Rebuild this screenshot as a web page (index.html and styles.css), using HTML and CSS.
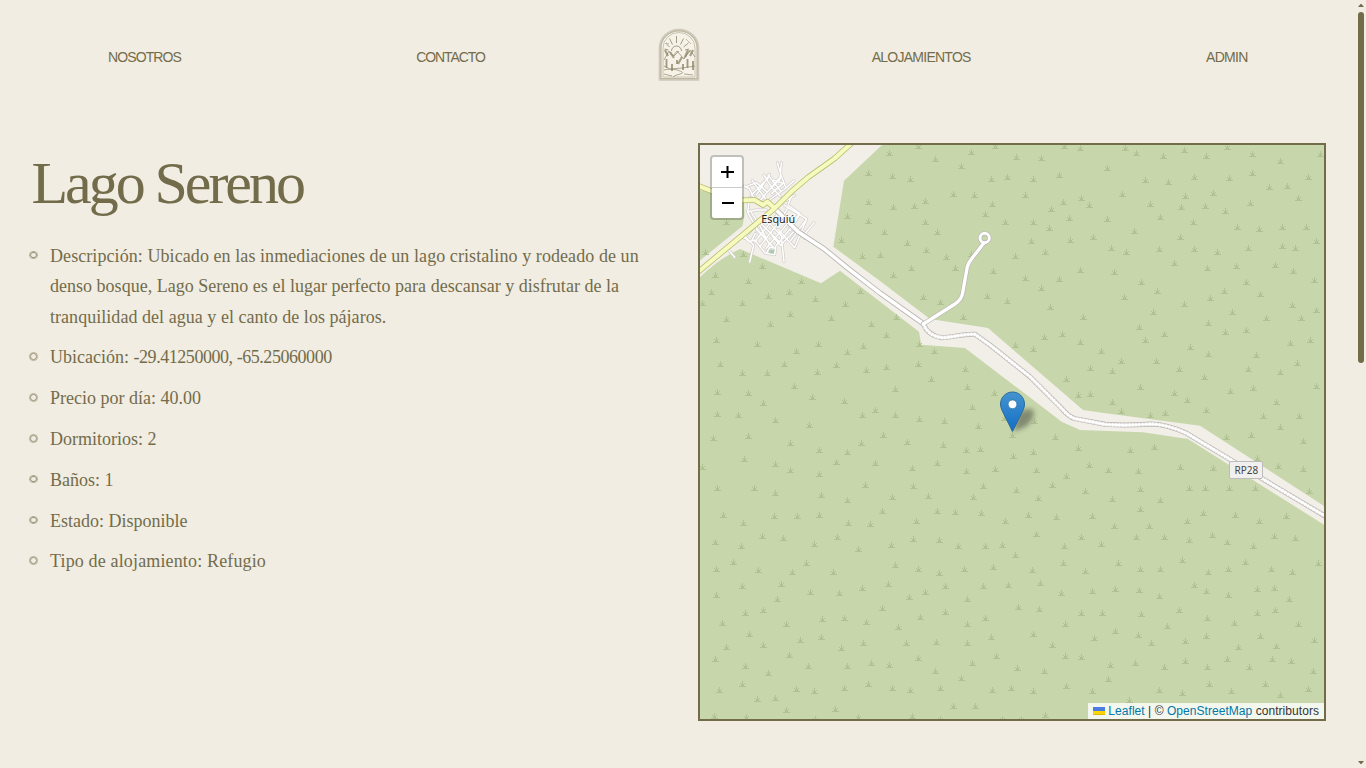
FILE: index.html
```html
<!DOCTYPE html>
<html lang="es">
<head>
<meta charset="utf-8">
<title>Lago Sereno</title>
<link rel="stylesheet" href="styles.css">
</head>
<body>
<header class="nav">
  <a class="link">NOSOTROS</a>
  <a class="link contact">CONTACTO</a>
  <a class="logo">
    <svg width="42" height="54" viewBox="0 0 42 54" fill="none" stroke="#736c4b">
      <path d="M2 51.500V20a19 18 0 0 1 38 0V51.500Z" fill="#f6f2e8" stroke="#cdc8b8" stroke-width="2.600"/>
      <path d="M3 50.500V20a18 17 0 0 1 36 0V50.500Z" stroke="#a9a38b" stroke-width=".6"/>
      <path d="M5 49V20a16 15.500 0 0 1 32 0V49Z" stroke="#b5af99" stroke-width=".7"/>
      <g opacity=".8">
      <path d="M13.500 23a5 5 0 0 1 10 0M18.500 15V8M14.500 16.500l-3-6M22.500 16.500l3-6M11.500 19l-4-4M25.500 19l5-4M10.500 22l-4-1M27 22l4-1" stroke-width=".8"/>
      <path d="M6 32l5-9 4 5 4-5 7 8 6-9 5 7M16 28l5-5M26 30l6-7" stroke-width=".7"/>
      <path d="M7 22l3 6M12 24l4 6M24 29l-4 7M30 22l-3 7M35 22l-3 6" stroke-width="2.200" opacity=".75"/>
      <path d="M8.500 31v9M14 36v7M19 32v4M25 36v6M29.500 31v9M35 33v9" stroke-width="1.900" opacity=".8"/>
      <path d="M6 38l6 3 12-1 13-2M6 42c8-2 15 0 18 2s-6 2-9 5M6 46l8 2M26 46l9 1" stroke-width=".7"/>
      <path d="M8 15l3 1M28 11l5 5" stroke-width=".5"/>
      </g>
    </svg>
  </a>
  <a class="link aloj">ALOJAMIENTOS</a>
  <a class="link admin">ADMIN</a>
</header>
<main class="content">
  <section class="info">
    <h1 class="title">Lago Sereno</h1>
    <ul class="facts">
      <li><span class="l1"><span class="key">Descripción:</span> Ubicado en las inmediaciones de un lago cristalino y rodeado de un</span><br><span class="l2">denso bosque, Lago Sereno es el lugar perfecto para descansar y disfrutar de la</span><br><span class="l3">tranquilidad del agua y el canto de los pájaros.</span></li>
      <li><span class="key">Ubicación:</span> <span class="coords">-29.41250000, -65.25060000</span></li>
      <li><span class="key">Precio por día:</span> 40.00</li>
      <li><span class="key">Dormitorios:</span> 2</li>
      <li><span class="key">Baños:</span> <span class="coords">1</span></li>
      <li><span class="key">Estado:</span> Disponible</li>
      <li class="kind"><span class="key">Tipo de alojamiento:</span> Refugio</li>
    </ul>
  </section>
  <section class="map">
    <svg class="tiles" width="624" height="574" viewBox="0 0 624 574">
      <defs>
        <g id="shrub" fill="#b0c291" shape-rendering="crispEdges">
          <path d="M3 0h1v5h-1zM0 5h7v1h-7zM1 2h1v1h-1zM5 2h1v1h-1zM2 3h3v2h-3z"/>
        </g>
        <filter id="soft" x="-50%" y="-50%" width="200%" height="200%"><feGaussianBlur stdDeviation="2.500"/></filter>
        <linearGradient id="pin" x2="0" y2="1"><stop stop-color="#4593d0"/><stop offset="1" stop-color="#126fc6"/></linearGradient>
      </defs>
      <rect width="624" height="574" fill="#f2efe9"/>
      <g fill="#c8d7ab">
        <path d="M182 0L144 35.700 133.300 101.700 180 136 230 174 288 183 383 265 400 267.500 500 280.700 624 361V0Z"/>
        <path d="M0 132Q20 113 40 104L121 138.300 140 125.700 219 186.700 221.300 199.700 265 203 361.700 276.700 380 285 443 287.300 488 294 624 379.700V574H0Z"/>
        <path d="M0 45L44 55 44.500 70 42.500 81 0 115.500Z"/>
      </g>
      <g id="shrubs"></g>
      <g fill="none" stroke-linecap="round" stroke-linejoin="round">
        <g transform="translate(-2 -5) scale(.33333)">
          <defs>
            <path id="st" d="M238 68l12 40 14 36-50 36M250 68l-4 50-30 30M198 105l25 40 24 24M210 105l38 48M163 122l40 55M145 140l30-12 30 26M138 138l16 8 14 28M175 165l40-62M160 165l50-50M188 180l55-65M225 120l30 10-34 30M264 144l24-22M150 215l25-5 30 0M155 172l-6 45 28 50 44 50M160 218l24 36 30 60M150 282l34-42M138 295l40-50M136 285l16 20 18-5 32 40M155 366l12-50-30-30M170 305l70-84M185 320l72-92M205 325l68-80M232 320l50-60M230 344l-25-4 10-18 18 3ZM175 268l50 52M190 252l55 55M205 240l52 55M240 215l80 80M258 195l68 42-36 86-50-55M268 206l-24 40M290 165l-24 16M280 170l-10 25 36 26-36 38M306 221l-30 50M326 237l-48 65M348 248l-30 36M250 290l8 75M222 288l26 28 38-40M92 330l18 22M162 300l10-20"/>
            <path id="yellow" d="M0 396L70 338 230 205 280 155 330 112 410 55 462 8M0 137L45 155 130 181 170 180 195 195 208 185 230 205"/>
            <path id="paved" d="M230 205L300 275 380 328 450 385 546 459 677 552"/>
          </defs>
          <use href="#st" stroke="#cfccc9" stroke-width="8.500"/>
          <use href="#st" stroke="#fff" stroke-width="4.500"/>
          <path d="M214 329h14v11h-14z" fill="#aacbaf"/>
          <use href="#paved" stroke="#b8b5b2" stroke-width="16"/>
          <use href="#paved" stroke="#fff" stroke-width="11"/>
          <use href="#yellow" stroke="#b4bb67" stroke-width="17"/>
          <use href="#yellow" stroke="#f7fabf" stroke-width="12.500"/>
        </g>
        <g transform="translate(180 75) scale(.33333)">
          <defs>
            <path id="gravel" d="M130 312Q144 347 185 353C220 353 250 340 285 343L330 375 450 470 545 565Q565 590 585 596L675 613Q735 618 810 612 860 612 920 640L1050 718 1140 772 1338 890"/>
            <path id="lane" d="M130 312L225 252Q246 238 248 218L262 140Q265 128 276 115L311 70"/>
          </defs>
          <use href="#lane" stroke="#b8b5b2" stroke-width="14"/>
          <circle cx="314" cy="54" r="14" stroke="#b8b5b2" stroke-width="13"/>
          <use href="#gravel" stroke="#b8b5b2" stroke-width="15"/>
          <use href="#gravel" stroke="#e2e0dd" stroke-width="11"/>
          <use href="#gravel" stroke="#fff" stroke-width="10" stroke-dasharray="4 6" stroke-linecap="butt"/>
          <use href="#gravel" stroke="#fff" stroke-width="5"/>
          <use href="#lane" stroke="#fff" stroke-width="10"/>
          <circle cx="314" cy="54" r="14" stroke="#fff" stroke-width="9"/>
        </g>
      </g>
      <text x="78.200" y="78" class="town" textLength="34" lengthAdjust="spacingAndGlyphs">Esquiú</text>
      <rect x="529.500" y="316.500" width="33" height="17" rx="1.500" fill="#f1f0ef" stroke="#bdbbbb"/>
      <text x="546.300" y="329" class="road">RP28</text>
      <path d="M313 287L318 268Q331 260 334 267 334 276 325 282Z" fill="#222" opacity=".42" filter="url(#soft)"/>
      <g transform="translate(300 246.500)">
        <path d="M12.500.500C5.900.500.500 5.900.500 12.500c0 2.500 1 5.500 2.500 8.500L12.500 40 22 21c1.500-3 2.500-6 2.500-8.500C24.500 5.900 19.100.500 12.500.500Z" fill="url(#pin)" stroke="#2e6c97"/>
        <circle cx="12.500" cy="12.800" r="4.400" fill="#fff" stroke="#3277ac" stroke-width=".8"/>
      </g>
    </svg>
    <div class="zoom"><a class="plus"><svg width="14" height="14"><path d="M7.500 1v12M1 7h13" stroke="#000" stroke-width="2"/></svg></a><a><svg width="14" height="14"><path d="M2 7h12" stroke="#000" stroke-width="2"/></svg></a></div>
    <div class="attribution"><svg width="12" height="8"><path fill="#4c7be1" d="M0 0h12v4H0z"/><path fill="#ffd500" d="M0 4h12v3H0z"/><path fill="#e0bc00" d="M0 7h12v1H0z"/></svg> <a>Leaflet</a> | © <a>OpenStreetMap</a> contributors</div>
  </section>
</main>
<svg class="scrollbar" width="10" height="768">
  <path d="M2 7h6L5.500 4h-1zM2 761h6L5.500 764h-1z" fill="#736c4b"/>
  <rect x="2" y="12" width="6" height="351" rx="3" fill="#736c4b"/>
</svg>
<script src="map.js"></script>
</body>
</html>
```
FILE: styles.css
```css
body {
  margin: 0;
  height: 768px;
  overflow: hidden;
  background: #f1ede2;
  color: #736c4b;
  font-family: "Liberation Serif", serif;
}
.nav {
  box-sizing: border-box;
  width: 1356px;
  height: 143px;
  padding: 28px 108px 0;
  display: flex;
  justify-content: space-between;
  align-items: flex-start;
}
.link {
  margin-top: 20px;
  font: 14px/18px "Liberation Sans", sans-serif;
  letter-spacing: -0.9px;
  width: 73px;
  white-space: nowrap;
}
.contact { width: 69px; letter-spacing: -1.1px; }
.aloj { width: 99px; letter-spacing: -0.75px; }
.admin { width: 42px; letter-spacing: -0.7px; }
.logo {
  width: 40px;
  margin: 0 -62px;
  display: flex;
  justify-content: center;
}
.logo svg { flex: none; }
.content {
  display: flex;
  width: 1326px;
}
.info {
  box-sizing: border-box;
  width: 698px;
  flex: none;
  padding-left: 30px;
}
.title {
  margin: 7px 0 24.5px 1.5px;
  font-size: 60px;
  line-height: 66px;
  font-weight: 400;
  letter-spacing: -3.05px;
  white-space: nowrap;
}
.facts {
  margin: 0;
  padding: 0;
  list-style: none;
  font-size: 18px;
  line-height: 30.6px;
  white-space: nowrap;
}
.facts li {
  position: relative;
  padding-left: 20px;
  margin-bottom: 10.2px;
}
.facts li::before {
  content: "";
  position: absolute;
  left: 0;
  top: 11px;
  width: 4.5px;
  height: 4.5px;
  border: 1.5px solid #958f75;
  outline: 0.5px solid #b5af99;
  outline-offset: -0.5px;
  border-radius: 50%;
}
.l1 { letter-spacing: 0.075px; }
.l2 { letter-spacing: 0.015px; }
.l3 { letter-spacing: 0.04px; }
.coords { letter-spacing: -0.45px; }
.kind { letter-spacing: 0.15px; }
.map {
  position: relative;
  box-sizing: border-box;
  width: 628px;
  height: 578px;
  border: 2px solid #736c4b;
  flex: none;
}
.tiles { display: block; }
.town, .road {
  font-family: "Noto Sans", sans-serif;
  text-anchor: middle;
}
.town {
  font-size: 11px;
  fill: #222;
  paint-order: stroke;
  stroke: rgba(255, 255, 255, 0.6);
  stroke-width: 2px;
}
.road { font-size: 10px; fill: #444; }
.zoom {
  position: absolute;
  left: 10px;
  top: 10px;
  width: 30px;
  border: 2px solid rgba(0, 0, 0, 0.2);
  border-radius: 4px;
  background: #fff;
  background-clip: padding-box;
}
.zoom a {
  display: flex;
  align-items: center;
  justify-content: center;
  height: 30px;
}
.zoom .plus { border-bottom: 1px solid #ccc; }
.attribution {
  position: absolute;
  right: 0;
  bottom: 0;
  padding: 0 5px;
  background: rgba(255, 255, 255, 0.8);
  color: #333;
  font: 12px/16px "Liberation Sans", sans-serif;
  letter-spacing: 0.05px;
  white-space: nowrap;
}
.attribution a { color: #0078a8; }
.scrollbar {
  position: absolute;
  right: 0;
  top: 0;
}
```
FILE: map.js
```js
const shrubs = `478,27 550,9 593,44 683,25 743,7 795,38 857,41 915,7 955,13 1067,14 1095,27 1162,35 1215,19 1270,35 1322,12 1385,31 1455,49 1554,30
425,81 486,89 530,97 657,63 733,98 773,93 837,99 902,88 1022,68 1117,100 1174,105 1239,92 1327,96 1384,81 1525,92
638,138 690,141 817,142 957,149 1060,138 1217,144 1287,137 1427,120 1472,118 1499,149
425,160 488,173 540,170 567,157 718,193 735,165 882,180 912,160 978,169 1130,165 1208,174 1267,170 1317,185 1380,162
373,198 425,211 465,241 523,272 567,213 768,214 838,213 878,231 928,203 1023,207 1090,239 1155,202 1237,213 1347,227 1402,232 1459,227 1519,227
358,263 410,306 455,304 597,241 570,289 620,310 792,306 832,266 868,297 929,263 987,254 1033,286 1070,295 1153,288 1205,254 1240,287 1297,296 1374,284 1459,280 1492,284 1545,267
488,358 533,339 643,338 683,300 738,347 817,366 857,393 902,369 955,345 1040,350 1107,376 1148,402 1190,325 1272,340 1314,402 1345,334 1370,376 1441,331 1487,346 1539,372
563,418 605,431 663,471 723,415 773,429 880,445 962,472 1065,418 1102,498 1137,458 1215,438 1275,489 1280,421 1335,458 1405,409 1420,476 1485,440 1507,476 1545,453
792,548 838,560 865,527 910,517 955,540 1008,564 1057,592 1117,535 1145,591 1165,518 1229,554 1275,573 1317,514 1370,507 1395,574 1479,542 1529,535 1497,597
920,640 980,611 1035,618 1105,663 1202,612 1265,635 1330,673 1375,612 1455,621 1545,658 950,685 980,680 1035,703 1190,679 1222,697 1270,724 1387,666 1444,703 1503,740
1057,728 1130,738 1167,732 1320,797 1382,792 1412,742 1454,770 1512,808 1397,855 1449,876 1512,885 1527,944
18,296 43,358 71,213 113,300 161,334 126,375 258,375 33,404 176,415 228,404 293,423 405,401 11,434 111,434 368,436 71,478 181,491 231,465 333,476 433,491 496,471
46,535 148,545 245,563 301,545 373,567 413,550 471,522 553,544 590,564 56,600 111,624 173,624 216,600 298,621 346,602 420,616 471,608 550,600 583,640 668,613
48,676 126,679 241,660 163,705 286,689 366,700 493,667 443,724 673,662 741,678 685,716 48,736 101,738 193,751 278,765 411,738 493,738 553,750 615,754 700,768 765,747 840,754
38,800 126,794 231,814 303,833 463,793 408,814 373,838 523,810 613,820 671,832 705,830 785,793 892,797 838,838 950,828 1080,833 1140,825
116,857 11,879 193,872 231,888 346,866 443,868 303,898 535,883 598,868 670,891 743,885 787,849 845,887 920,904 977,874 1025,887 1099,890 1204,879 1287,883
48,936 141,936 193,950 308,955 418,928 486,960 373,968 538,930 575,957 713,931 688,961 795,941 850,963 886,927 967,943 1035,966 1105,939 1155,968 1227,936 1267,936 1327,935 1391,935
63,1009 113,1031 191,1012 248,1012 303,1009 376,1031 461,998 430,1033 545,1025 598,998 643,1001 708,1004 768,1025 825,1009 895,1015 985,1011 1040,1038 1105,993 1127,1039 1222,1025 1262,1004 1342,1009 1402,1025 1469,1012
43,1082 108,1093 161,1066 213,1071 291,1088 348,1069 400,1102 483,1091 538,1074 603,1077 650,1093 718,1093 760,1090 845,1061 915,1093 957,1069 1007,1088 1095,1069 1165,1069 1227,1077 1285,1063 1322,1083 1387,1093 1439,1066 1492,1072
88,1137 45,1156 151,1159 271,1140 236,1164 338,1164 493,1145 550,1156 603,1166 665,1157 738,1151 792,1118 835,1159 912,1140 967,1160 1050,1140 1105,1156 1155,1156 1209,1131 1275,1164 1367,1137 1325,1156 1432,1156 1484,1164 1550,1140
46,1226 111,1202 208,1196 281,1218 353,1221 410,1207 475,1196 528,1232 198,1237 568,1218 618,1202 713,1202 775,1200 855,1194 672,1237 907,1221 985,1216 1042,1210 1103,1213 1152,1229 1239,1199 1270,1216 1325,1226 1397,1210 1439,1207 1477,1237
118,1275 163,1267 61,1303 221,1305 311,1291 366,1289 420,1300 461,1262 501,1313 555,1286 618,1273 673,1305 718,1289 800,1259 852,1264 917,1305 957,1275 1010,1275 1107,1278 1172,1310 1202,1267 1272,1290 1340,1302 1397,1275 1442,1267 1499,1305
128,1332 163,1362 71,1368 256,1349 308,1340 358,1370 413,1357 520,1357 595,1354 673,1357 733,1340 837,1332 885,1362 990,1343 1042,1324 1100,1335 1132,1357 1217,1351 1270,1337 1349,1367 1405,1337 1444,1365 1540,1349
43,1400 118,1419 176,1438 228,1389 276,1419 373,1419 433,1411 478,1416 550,1397 593,1432 685,1411 745,1392 797,1424 865,1432 917,1392 957,1394 1030,1416 1092,1411 1165,1421 1217,1405 1272,1421 1322,1400 1377,1421 1434,1400 1482,1405 1537,1432
111,1468 53,1484 148,1508 193,1506 246,1481 291,1487 366,1478 425,1468 486,1479 530,1484 605,1479 658,1452 735,1484 783,1479 838,1487 920,1473 985,1487 1025,1454 1077,1511 1152,1484 1209,1492 1277,1468 1332,1487 1417,1468 1454,1497 1525,1481
41,1555 121,1558 221,1538 343,1535 293,1563 401,1556 535,1555 638,1527 693,1527 605,1563 760,1563 808,1562 868,1553`;

const layer = document.getElementById("shrubs");
for (const pair of shrubs.split(/\s+/)) {
  const [x, y] = pair.split(",").map(Number);
  const mark = document.createElementNS("http://www.w3.org/2000/svg", "use");
  mark.setAttribute("href", "#shrub");
  mark.setAttribute("x", Math.round(x / 2.497 - 5.5));
  mark.setAttribute("y", Math.round(y / 2.713 - 5));
  layer.append(mark);
}
```
